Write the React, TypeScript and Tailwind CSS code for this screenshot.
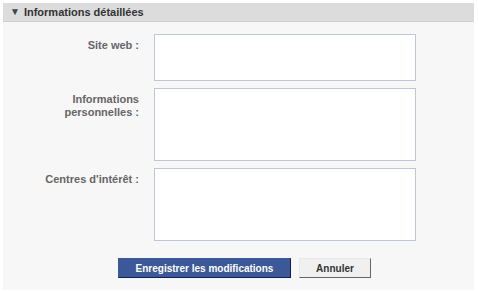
import React from 'react';

const fields = [
  { label: ['Site web :'], h: 'h-[47px]' },
  { label: ['Informations', 'personnelles :'], h: 'h-[73px]' },
  { label: ["Centres d'intérêt :"], h: 'h-[73px]' },
];

export default function App() {
  return (
    <div className="w-[478px] h-[293px] bg-white pt-[3px] pl-[3px] font-['Liberation_Sans',Arial,sans-serif]">
      <div className="w-[471px] h-[287px] bg-[#f7f7f7]">
        <div className="h-[19px] bg-[#dcdcdc] border-b border-[#d0d0d0] flex items-center pl-[7px] gap-[4px]">
          <span className="text-[10px] text-[#444] leading-none">▼</span>
          <span className="text-[11px] font-bold text-[#333]">Informations détaillées</span>
        </div>
        <div className="flex flex-col gap-[7px] pt-[12px]">
          {fields.map((f, i) => (
            <div key={i} className="flex">
              <div className="w-[136px] pt-[5px] text-right text-[11px] font-bold text-[#666] leading-[13px]">
                {f.label.map((l) => (
                  <div key={l}>{l}</div>
                ))}
              </div>
              <textarea className={`ml-[15px] w-[262px] ${f.h} bg-white border border-[#bdc7d8] resize-none outline-none`} />
            </div>
          ))}
        </div>
        <div className="flex gap-[8px] pl-[115px] pt-[17px]">
          <button className="w-[173px] h-[20px] bg-[#3b5998] border border-[#3b5998] border-b-[#0e1f5b] border-r-[#0e1f5b] text-white text-[10px] font-bold">
            Enregistrer les modifications
          </button>
          <button className="w-[72px] h-[20px] bg-[#f0f0f0] border border-[#e7e7e7] border-b-[#666] border-r-[#666] text-[#333] text-[10px] font-bold">
            Annuler
          </button>
        </div>
      </div>
    </div>
  );
}
